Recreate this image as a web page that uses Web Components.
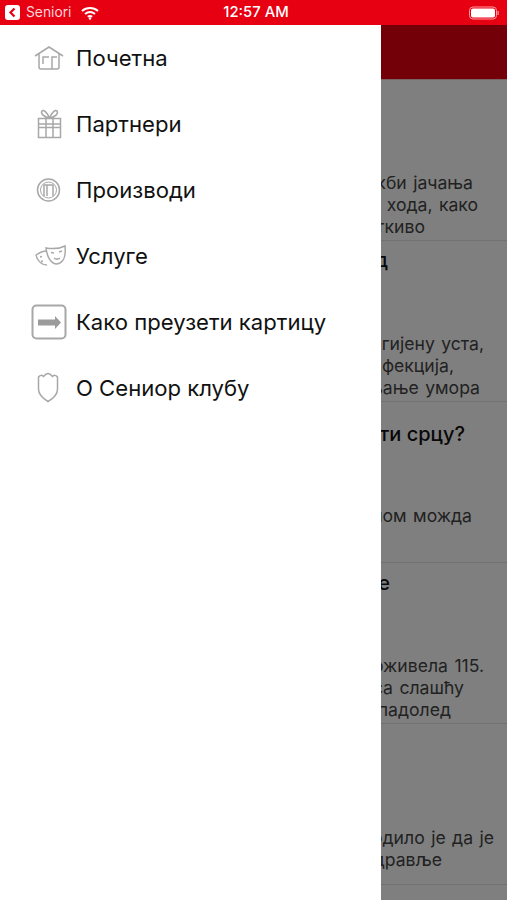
<!DOCTYPE html>
<html lang="sr">
<head>
<meta charset="utf-8">
<title>Seniori</title>
<style>
html, body { margin: 0; height: 100%; }
body { font-family: Inter, Roboto, "Liberation Sans", sans-serif; overflow: hidden; }
</style>
</head>
<body>
<app-shell>
  <status-bar slot="status"></status-bar>

  <news-row slot="content">
    <span slot="body" style="--end:34px">кби јачања</span>
    <span slot="body" style="--end:29px">т хода, како</span>
    <span slot="body" style="--end:82px">ткиво</span>
  </news-row>
  <news-row slot="content" title-top="7">
    <span slot="title" style="--end:119px">ад</span>
    <span slot="body" style="--end:23px">игијену уста,</span>
    <span slot="body" style="--end:53px">нфекција,</span>
    <span slot="body" style="--end:27px">њање умора</span>
  </news-row>
  <news-row slot="content" title-top="20">
    <span slot="title" style="--end:42px">ати срцу?</span>
    <span slot="body" style="--end:35px">ном можда</span>
    <span slot="body">&nbsp;</span>
  </news-row>
  <news-row slot="content" title-top="8">
    <span slot="title" style="--end:117px">ре</span>
    <span slot="body" style="--end:23px">оживела 115.</span>
    <span slot="body" style="--end:43px">са слашћу</span>
    <span slot="body" style="--end:56px">падолед</span>
  </news-row>
  <news-row slot="content" title-top="8">
    <span slot="body" style="--end:13px">одило је да је</span>
    <span slot="body" style="--end:65px">здравље</span>
  </news-row>

  <side-menu slot="drawer">
    <menu-item>
      <svg slot="icon" viewBox="0 0 36 36"><path d="M4 16 18 7l14 9M8 14v13a2 2 0 0 0 2 2h16a2 2 0 0 0 2-2V14M12 24v-7h6M21 29V17h5"/></svg>
      Почетна
    </menu-item>
    <menu-item>
      <svg slot="icon" viewBox="0 0 36 36"><path d="M7.500 12.500h22v19h-22zM7.500 18h22M7.500 21.500h22M15 12.500v19M22 12.500v19M18.500 12c-2-5-6-9-7.500-7-1.500 2 1 6 7.500 7zM18.500 12c2-5 6-9 7.500-7 1.500 2-1 6-7.500 7z"/></svg>
      Партнери
    </menu-item>
    <menu-item>
      <svg slot="icon" viewBox="0 0 36 36"><circle cx="17.500" cy="18" r="11"/><circle cx="17.500" cy="18" r="8" stroke-width="1"/><path d="M13 24V13h9v11M16 13v11"/></svg>
      Производи
    </menu-item>
    <menu-item>
      <svg slot="icon" viewBox="0 0 36 36"><path d="M15 10c6 1 13 1 19-2 1 9-1 17-8 18-6 0-10-7-11-16zM20 14.500l3 .5M28 14l3-1M23 20c2 1.500 4 1.500 6 0"/><path d="M15 13c-4 0-7 2-10 4 1 5 5 10 11 10M9 19l2-.5M10 23l2 .5" stroke-width="1.300"/></svg>
      Услуге
    </menu-item>
    <menu-item>
      <svg slot="icon" viewBox="0 0 36 36"><rect x="1.500" y="1.500" width="33" height="33" rx="4" stroke-width="2"/><path d="M7 15.500h17V12l6 6.500-6 6.500v-3.500H7z" fill="#9b9b9b" stroke="none"/></svg>
      Како преузети картицу
    </menu-item>
    <menu-item>
      <svg slot="icon" viewBox="0 0 36 36"><path d="M7.500 7q2.500-3 5-.5q2.500-3 4.500-3q2 0 4.500 3q2.500-2.500 5 .5v12c0 5-4 9.500-9.500 12.500C12 28.500 7.500 24 7.500 19z"/></svg>
      О Сениор клубу
    </menu-item>
  </side-menu>
</app-shell>

<script>
// outer frame: status bar on top, list behind, drawer and scrim over it
class AppShell extends HTMLElement {
  constructor() {
    super();
    this.attachShadow({ mode: 'open' });
    this.shadowRoot.innerHTML = `
    <style>
      :host { display: flex; flex-direction: column; width: 507px; height: 900px; overflow: hidden; background: #fff; }
      .stage { position: relative; flex: 1; overflow: hidden; }
      .topbar { height: 54px; background: #e60012; border-bottom: 1px solid #f2c8cb; }
      .scrim { position: absolute; inset: 0; background: rgba(0,0,0,.5); }
      .drawer { position: absolute; top: 0; left: 0; bottom: 0; width: 381px; background: #fff; }
    </style>
    <slot name="status"></slot>
    <div class="stage">
      <div class="topbar"></div>
      <slot name="content"></slot>
      <div class="scrim"></div>
      <div class="drawer"><slot name="drawer"></slot></div>
    </div>`;
  }
}

class StatusBar extends HTMLElement {
  constructor() {
    super();
    this.attachShadow({ mode: 'open' });
    this.shadowRoot.innerHTML = `
    <style>
      :host { display: grid; grid-template-columns: 1fr auto 1fr; align-items: center; height: 25px; padding: 0 8px 0 5px; background: #e60012; color: #fff; font: 14px/25px Inter, Roboto, sans-serif; }
      .left { display: flex; align-items: center; }
      .back { display: block; width: 15px; height: 15px; }
      .name { margin-left: 6px; font-size: 13.800px; color: #ffd5d8; }
      .wifi { display: block; width: 18px; height: 14px; margin-left: 10px; }
      .time { margin-left: 8px; font-size: 14.800px; font-weight: 500; }
      .battery { display: block; justify-self: end; width: 30px; height: 14px; }
    </style>
    <div class="left">
      <svg class="back" viewBox="0 0 15 15"><rect width="15" height="15" rx="3" fill="#fff"/><path d="M9.500 3.500 5.500 7.500l4 4" fill="none" stroke="#e60012" stroke-width="2.200"/></svg>
      <span class="name">Seniori</span>
      <svg class="wifi" viewBox="0 0 18 14" fill="none" stroke="#fff" stroke-width="2"><path d="M1 5c4.500-4 11.500-4 16 0M4 8c3-2.500 7-2.500 10 0M6.800 10.800c1.300-1 3.100-1 4.400 0"/><circle cx="9" cy="12.500" r="1.200" fill="#fff" stroke="none"/></svg>
    </div>
    <span class="time">12:57 AM</span>
    <svg class="battery" viewBox="0 0 30 14"><rect x=".5" y="1" width="27" height="12" rx="3.500" fill="none" stroke="#ff9aa0"/><rect x="2" y="2.500" width="24" height="9" rx="2" fill="#fff"/><rect x="28.500" y="5" width="1.200" height="4" fill="#ff9aa0"/></svg>`;
  }
}

// one article in the list behind the drawer
class NewsRow extends HTMLElement {
  constructor() {
    super();
    this.attachShadow({ mode: 'open' });
    this.shadowRoot.innerHTML = `
    <style>
      :host { display: flex; flex-direction: column; box-sizing: border-box; height: 161px; border-bottom: 1px solid #e4e4e4; color: #000; }
      .title { display: flex; flex-direction: column; align-items: flex-end; font-size: 20px; font-weight: 500; line-height: 24px; color: #111; }
      .body { margin-top: auto; height: 66px; margin-bottom: 2px; display: flex; flex-direction: column; justify-content: center; align-items: flex-end; font-size: 17.600px; line-height: 22px; word-spacing: 1.500px; color: #444; white-space: nowrap; }
      ::slotted(span) { display: block; margin-right: var(--end, 0); white-space: nowrap; }
    </style>
    <div class="title"><slot name="title"></slot></div>
    <div class="body"><slot name="body"></slot></div>`;
    const top = this.getAttribute('title-top');
    if (top) this.shadowRoot.querySelector('.title').style.paddingTop = top + 'px';
  }
}

class SideMenu extends HTMLElement {
  constructor() {
    super();
    this.attachShadow({ mode: 'open' });
    this.shadowRoot.innerHTML = `
    <style>
      :host { display: flex; flex-direction: column; padding-left: 31px; }
    </style>
    <slot></slot>`;
  }
}

class MenuItem extends HTMLElement {
  constructor() {
    super();
    this.attachShadow({ mode: 'open' });
    this.shadowRoot.innerHTML = `
    <style>
      :host { display: flex; align-items: center; gap: 9px; height: 66px; font-size: 22.100px; color: #111; white-space: nowrap; }
      ::slotted(svg) { flex: none; width: 36px; height: 36px; fill: none; stroke: #a8a8a8; stroke-width: 1.500; }
    </style>
    <slot name="icon"></slot>
    <span><slot></slot></span>`;
  }
}

customElements.define('app-shell', AppShell);
customElements.define('status-bar', StatusBar);
customElements.define('news-row', NewsRow);
customElements.define('side-menu', SideMenu);
customElements.define('menu-item', MenuItem);
</script>
</body>
</html>
